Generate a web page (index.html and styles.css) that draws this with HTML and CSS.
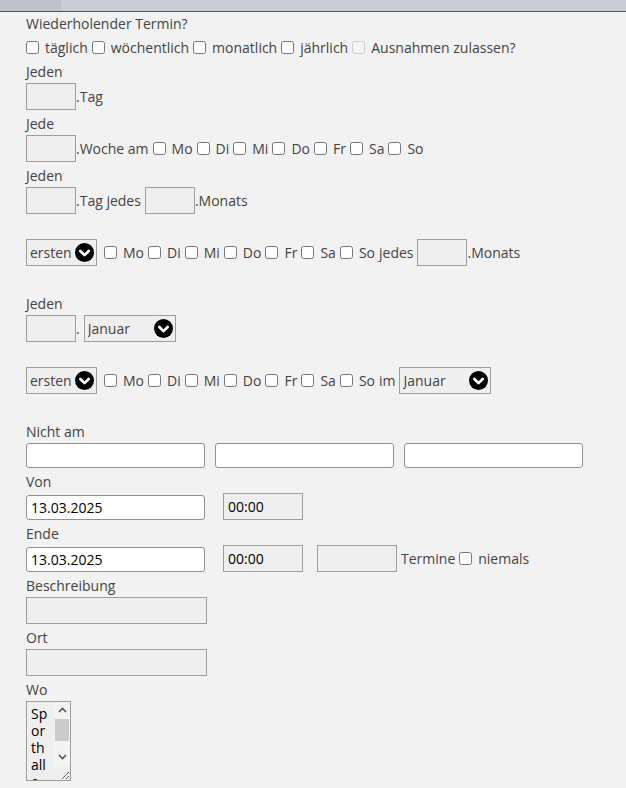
FILE: index.html
```html
<!DOCTYPE html>
<html lang="de">
<head>
    <meta charset="UTF-8">
    <title>Termin</title>
    <link rel="stylesheet" href="styles.css">
</head>
<body>

    <div class="tabs">
        <div class="tab tab-active"></div>
        <div class="tab"></div>
    </div>

    <form class="container">
        <div class="title">Wiederholender Termin?</div>
        <div class="row options">
            <label class="check"><input type="checkbox">täglich</label>
            <label class="check"><input type="checkbox">wöchentlich</label>
            <label class="check"><input type="checkbox">monatlich</label>
            <label class="check"><input type="checkbox">jährlich</label>
            <label class="check"><input type="checkbox" disabled>Ausnahmen zulassen?</label>
        </div>

        <div class="label first">Jeden</div>
        <div class="row">
            <input type="text" class="box">
            <span>.Tag</span>
        </div>

        <div class="label">Jede</div>
        <div class="row">
            <input type="text" class="box">
            <span>.Woche am</span>
            <label class="check"><input type="checkbox">Mo</label>
            <label class="check"><input type="checkbox">Di</label>
            <label class="check"><input type="checkbox">Mi</label>
            <label class="check"><input type="checkbox">Do</label>
            <label class="check"><input type="checkbox">Fr</label>
            <label class="check"><input type="checkbox">Sa</label>
            <label class="check"><input type="checkbox">So</label>
        </div>

        <div class="label">Jeden</div>
        <div class="row">
            <input type="text" class="box">
            <span>.Tag jedes</span>
            <input type="text" class="box spaced">
            <span>.Monats</span>
        </div>

        <div class="row section">
            <span class="select select-nth">
                <select><option>ersten</option><option>zweiten</option><option>dritten</option><option>vierten</option><option>letzten</option></select>
                <svg class="chev" viewBox="0 0 20 20" width="19" height="19"><circle cx="10" cy="10" r="10"/><path d="M5.6 8.4 10 12.8l4.4-4.4" fill="none" stroke="#fff" stroke-width="2.8" stroke-linecap="round" stroke-linejoin="round"/></svg>
            </span>
            <label class="check"><input type="checkbox">Mo</label>
            <label class="check"><input type="checkbox">Di</label>
            <label class="check"><input type="checkbox">Mi</label>
            <label class="check"><input type="checkbox">Do</label>
            <label class="check"><input type="checkbox">Fr</label>
            <label class="check"><input type="checkbox">Sa</label>
            <label class="check"><input type="checkbox">So</label>
            <span class="word">jedes</span>
            <input type="text" class="box spaced">
            <span>.Monats</span>
        </div>

        <div class="label after-section">Jeden</div>
        <div class="row">
            <input type="text" class="box">
            <span>.</span>
            <span class="select select-month spaced">
                <select><option>Januar</option><option>Februar</option><option>März</option></select>
                <svg class="chev" viewBox="0 0 20 20" width="19" height="19"><circle cx="10" cy="10" r="10"/><path d="M5.6 8.4 10 12.8l4.4-4.4" fill="none" stroke="#fff" stroke-width="2.8" stroke-linecap="round" stroke-linejoin="round"/></svg>
            </span>
        </div>

        <div class="row section">
            <span class="select select-nth">
                <select><option>ersten</option><option>zweiten</option><option>dritten</option><option>vierten</option><option>letzten</option></select>
                <svg class="chev" viewBox="0 0 20 20" width="19" height="19"><circle cx="10" cy="10" r="10"/><path d="M5.6 8.4 10 12.8l4.4-4.4" fill="none" stroke="#fff" stroke-width="2.8" stroke-linecap="round" stroke-linejoin="round"/></svg>
            </span>
            <label class="check"><input type="checkbox">Mo</label>
            <label class="check"><input type="checkbox">Di</label>
            <label class="check"><input type="checkbox">Mi</label>
            <label class="check"><input type="checkbox">Do</label>
            <label class="check"><input type="checkbox">Fr</label>
            <label class="check"><input type="checkbox">Sa</label>
            <label class="check"><input type="checkbox">So</label>
            <span class="word">im</span>
            <span class="select select-month spaced">
                <select><option>Januar</option><option>Februar</option><option>März</option></select>
                <svg class="chev" viewBox="0 0 20 20" width="19" height="19"><circle cx="10" cy="10" r="10"/><path d="M5.6 8.4 10 12.8l4.4-4.4" fill="none" stroke="#fff" stroke-width="2.8" stroke-linecap="round" stroke-linejoin="round"/></svg>
            </span>
        </div>

        <div class="label after-section">Nicht am</div>
        <div class="row exceptions">
            <input type="text" class="field">
            <input type="text" class="field">
            <input type="text" class="field">
        </div>

        <div class="label">Von</div>
        <div class="row bottom">
            <input type="text" class="field" value="13.03.2025">
            <input type="text" class="time" value="00:00">
        </div>

        <div class="label">Ende</div>
        <div class="row bottom">
            <input type="text" class="field" value="13.03.2025">
            <input type="text" class="time" value="00:00">
            <input type="text" class="time count">
            <span class="word">Termine</span>
            <label class="check"><input type="checkbox">niemals</label>
        </div>

        <div class="label">Beschreibung</div>
        <input type="text" class="box long">

        <div class="label">Ort</div>
        <input type="text" class="box long">

        <div class="label">Wo</div>
        <div class="where-wrap">
            <textarea class="where">Sporthalle 1</textarea>
            <!-- drawn scrollbar, the real one is hidden in the screenshot -->
            <div class="scrollbar">
                <svg class="arrow arrow-up" viewBox="0 0 9 6" width="9" height="6"><path d="M1 5 4.5 1.5 8 5" fill="none" stroke="#555" stroke-width="1.6"/></svg>
                <div class="thumb"></div>
                <svg class="arrow arrow-down" viewBox="0 0 9 6" width="9" height="6"><path d="M1 1 4.5 4.5 8 1" fill="none" stroke="#555" stroke-width="1.6"/></svg>
            </div>
        </div>
    </form>

</body>
</html>
```

FILE: styles.css
```css
* {
    box-sizing: border-box;
}
body {
    margin: 0;
    background: #f2f2f2;
    font-family: "Open Sans", "Liberation Sans", sans-serif;
    font-size: 14px;
    color: #444;
}
.tabs {
    display: flex;
    height: 12px;
    background: #cacdd5;
    border-bottom: 1px solid #4d525e;
}
.tab-active {
    width: 61px;
    background: #bec2cb;
}
.container {
    padding-left: 26px;
}
.title {
    margin-top: 2px;
    line-height: 19px;
}
.label {
    line-height: 19px;
    margin: 4px 0 2px;
}
.label.first {
    margin-top: 1px;
}
.label.after-section {
    margin-top: 28px;
}
.row {
    display: flex;
    align-items: center;
    height: 27px;
    white-space: nowrap;
}
.row.options {
    margin-top: 1px;
}
.row.section {
    margin-top: 25px;
}
.row.bottom {
    align-items: flex-end;
}
.row.bottom .word, .row.bottom .check {
    align-self: center;
}
input, select, textarea {
    font-family: inherit;
    font-size: 14px;
    margin: 0;
}
.check {
    display: flex;
    align-items: center;
    margin-left: 4px;
}
.options .check:first-child {
    margin-left: 0;
}
.check input {
    width: 13px;
    height: 13px;
    margin: 0 6px 0 0;
}
.select + .check {
    margin-left: 7px;
}
.word {
    margin-left: 4px;
}
.spaced {
    margin-left: 4px;
}
.box {
    width: 50px;
    height: 27px;
    padding: 0 4px;
    background: #efefef;
    border: 1px solid #9d9d9d;
    border-radius: 0;
    color: #000;
}
.box.long {
    display: block;
    width: 181px;
}
.select {
    position: relative;
    display: flex;
}
.select select {
    appearance: none;
    height: 27px;
    padding: 0 22px 0 3px;
    background: #efefef;
    border: 1px solid #9d9d9d;
    border-radius: 0;
    color: #444;
}
.select-nth select {
    width: 71px;
}
.select-month select {
    width: 92px;
}
.chev {
    position: absolute;
    right: 3px;
    top: 4px;
    pointer-events: none;
}
.field {
    width: 179px;
    height: 25px;
    padding: 0 4px;
    background: #fff;
    border: 1px solid #8f8f9d;
    border-radius: 3px;
    color: #000;
}
.exceptions {
    height: 25px;
    gap: 10px;
}
.time {
    width: 80px;
    height: 27px;
    margin-left: 18px;
    padding: 0 4px;
    background: #efefef;
    border: 1px solid #9d9d9d;
    color: #000;
}
.time.count {
    margin-left: 14px;
}
.where-wrap {
    position: relative;
    width: 45px;
}
.where {
    display: block;
    width: 45px;
    height: 80px;
    padding: 3px 20px 3px 4px;
    line-height: 17px;
    background: #efefef;
    border: 1px solid #9d9d9d;
    color: #000;
    overflow: hidden;
}
.scrollbar {
    position: absolute;
    top: 1px;
    right: 1px;
    width: 16px;
    height: 63px;
    background: #f3f3f3;
    pointer-events: none;
}
.thumb {
    position: absolute;
    top: 17px;
    left: 1px;
    right: 1px;
    height: 22px;
    background: #cbcbcb;
}
.arrow {
    position: absolute;
    left: 4px;
}
.arrow-up {
    top: 5px;
}
.arrow-down {
    top: 52px;
}
```
